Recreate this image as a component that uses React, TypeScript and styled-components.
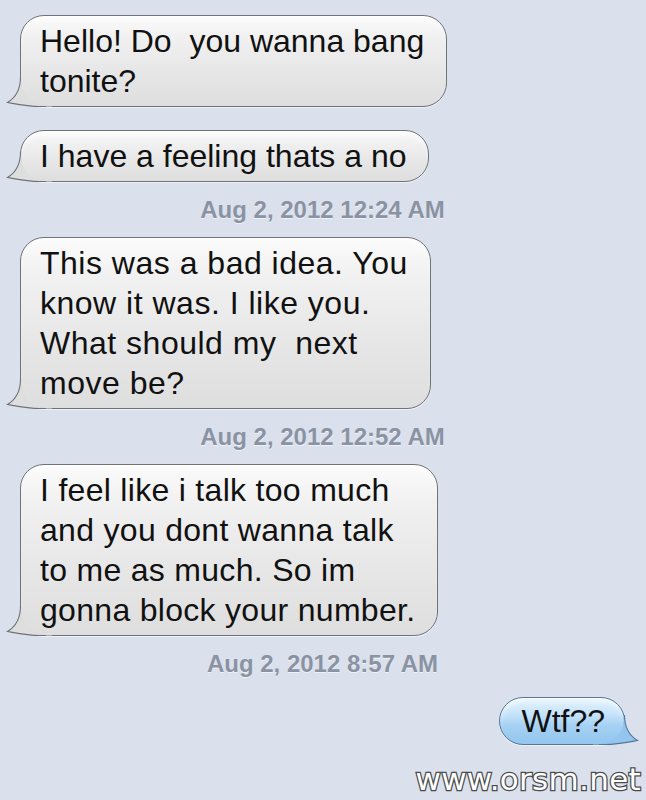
import React from "react";
import styled, { createGlobalStyle } from "styled-components";

const Global = createGlobalStyle`
  html, body { margin: 0; padding: 0; background: #dbe1ec; }
  body { width: 646px; height: 800px; overflow: hidden; }
`;

const Thread = styled.div`
  display: flex;
  flex-direction: column;
  padding: 15px 21px 0 20px;
  font-family: "Liberation Sans", Arial, Helvetica, sans-serif;
`;

const Bubble = styled.div<{ $out?: boolean; $gap?: number }>`
  position: relative;
  align-self: ${(p) => (p.$out ? "flex-end" : "flex-start")};
  margin-top: ${(p) => p.$gap ?? 0}px;
  padding: ${(p) => (p.$out ? "3px 19px 3px 21px" : "5px 22px 5px 19px")};
  border: 1px solid ${(p) => (p.$out ? "#54779a" : "#6f7378")};
  border-radius: 24px;
  background: ${(p) =>
    p.$out
      ? "linear-gradient(to bottom, #e2f2fe 0%, #c6e3fa 35%, #a6d1f4 60%, #93c5ee 100%)"
      : "linear-gradient(to bottom, #fbfbfb 0%, #f1f1f1 22%, #e7e7e7 60%, #dedede 100%)"};
  box-shadow: inset 0 1px 0 rgba(255, 255, 255, 0.95),
    inset 0 7px 8px -5px rgba(255, 255, 255, 0.8),
    0 1px 0 rgba(255, 255, 255, 0.55);
  color: #111;
  font-size: 32px;
  line-height: 40px;
  white-space: pre;
`;

const Line = styled.span<{ $track?: number }>`
  position: relative;
  z-index: 1;
  display: block;
  letter-spacing: ${(p) => p.$track ?? 0}px;
`;

const TailSvg = styled.svg<{ $out?: boolean }>`
  position: absolute;
  bottom: -1px;
  ${(p) => (p.$out ? "right: -15px; transform: scaleX(-1);" : "left: -15px;")}
  width: 50px;
  height: 40px;
  overflow: visible;
`;

const Tail = ({ out }: { out?: boolean }) => (
  <TailSvg $out={out} viewBox="0 0 50 40">
    <path
      d="M14 10 C14 24 9 31 1.5 35.5 C10 37 22 39.5 34 39.5 L46 39.5 L46 38.5 L38 38.5 A22.5 22.5 0 0 1 15.5 16 L15.5 10 Z"
      fill={out ? "#93c5ee" : "#dedede"}
    />
    <path
      d="M14.5 10 C14.5 24 9 31 1.5 35.5 C10 37 22 39.5 34 39.5 L40 39.5"
      fill="none"
      stroke={out ? "#54779a" : "#6f7378"}
      strokeWidth="1.1"
    />
  </TailSvg>
);

const Stamp = styled.div`
  height: 55px;
  display: flex;
  align-items: center;
  justify-content: center;
  color: #8a93a3;
  font-size: 24px;
  font-weight: bold;
  text-shadow: 0 1px 0 rgba(255, 255, 255, 0.6);
`;

const Watermark = styled.div`
  align-self: flex-end;
  margin: 16px -16px 0 0;
  font-family: "DejaVu Sans", Verdana, sans-serif;
  font-size: 31px;
  line-height: 36px;
  color: #ffffff;
  -webkit-text-stroke: 2.6px #4b4b4b;
  paint-order: stroke fill;
  letter-spacing: 0.3px;
`;

const Msg = ({
  lines,
  out,
  gap,
  track,
}: {
  lines: string[];
  out?: boolean;
  gap?: number;
  track?: number;
}) => (
  <Bubble $out={out} $gap={gap}>
    {lines.map((l, i) => (
      <Line key={i} $track={track}>
        {l}
      </Line>
    ))}
    <Tail out={out} />
  </Bubble>
);

export default function App() {
  return (
    <>
      <Global />
      <Thread>
        <Msg lines={["Hello! Do  you wanna bang", "tonite?"]} />
        <Msg lines={["I have a feeling thats a no"]} gap={23} />
        <Stamp>Aug 2, 2012 12:24 AM</Stamp>
        <Msg
          track={0.5}
          lines={[
            "This was a bad idea. You",
            "know it was. I like you.",
            "What should my  next",
            "move be?",
          ]}
        />
        <Stamp>Aug 2, 2012 12:52 AM</Stamp>
        <Msg
          track={0.3}
          lines={[
            "I feel like i talk too much",
            "and you dont wanna talk",
            "to me as much. So im",
            "gonna block your number.",
          ]}
        />
        <Stamp>Aug 2, 2012 8:57 AM</Stamp>
        <Msg lines={["Wtf??"]} out gap={6} />
        <Watermark>www.orsm.net</Watermark>
      </Thread>
    </>
  );
}
